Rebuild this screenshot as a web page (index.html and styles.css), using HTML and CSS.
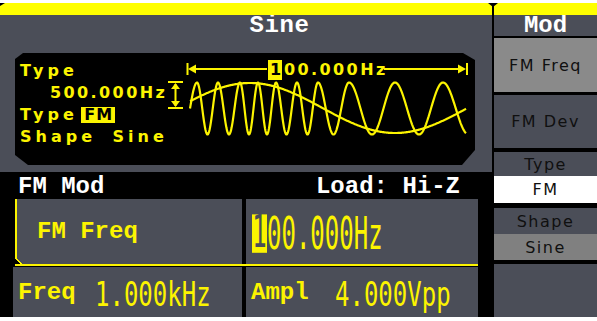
FILE: index.html
```html
<!DOCTYPE html>
<html lang="en">
	<head>
		<meta charset="UTF-8" />
		<meta name="viewport" content="width=device-width, initial-scale=1.0" />
		<title>FM Mod</title>
		<link rel="stylesheet" href="styles.css">
	</head>
	<body>
		<div class="screen">
			<div class="main">
				<div class="bar"></div>
				<div class="upper">
					<div class="title">Sine</div>
					<div class="display">
						<div class="params">
							<div>Type</div>
							<div class="num indent">500.000Hz</div>
							<div class="type-line">Type <span class="tag">FM</span></div>
							<div class="shape">Shape Sine</div>
						</div>
						<svg class="wave" viewBox="165 53 310 112" width="310" height="112">
							<g class="marks">
								<line x1="187.5" y1="63" x2="187.5" y2="75" />
								<line x1="195" y1="69" x2="267" y2="69" />
								<line x1="384" y1="69" x2="459" y2="69" />
								<line x1="467" y1="63" x2="467" y2="75" />
								<line x1="168" y1="82" x2="183" y2="82" />
								<line x1="168" y1="108" x2="183" y2="108" />
								<line x1="175.5" y1="84" x2="175.5" y2="106" />
							</g>
							<g class="heads">
								<polygon points="188,69 196,64.5 196,73.5" />
								<polygon points="466,69 458,64.5 458,73.5" />
								<polygon points="175.5,83 171,89 180,89" />
								<polygon points="175.5,107 171,101 180,101" />
							</g>
							<rect class="cursor-box" x="268" y="60" width="14" height="20" />
							<text class="scope-text cursor-digit" x="270" y="75">1</text>
							<text class="scope-text" x="284" y="75">00.000Hz</text>
							<polyline id="modulator" class="trace" points="" />
							<polyline id="carrier" class="trace" points="" />
						</svg>
					</div>
				</div>
				<div class="lower">
					<div class="status">
						<span>FM Mod</span>
						<span>Load: Hi-Z</span>
					</div>
					<div class="row first">
						<div class="cell selected">FM Freq</div>
						<div class="cell value">
							<span class="big tall"><span class="cursor">1</span>00.000Hz</span>
						</div>
					</div>
					<div class="row second">
						<div class="cell">
							<span class="lbl freq-lbl">Freq</span>
							<span class="big short">1.000kHz</span>
						</div>
						<div class="cell">
							<span class="lbl ampl-lbl">Ampl</span>
							<span class="big short">4.000Vpp</span>
						</div>
					</div>
				</div>
			</div>
			<div class="divider"></div>
			<div class="side">
				<div class="bar"></div>
				<div class="side-head">Mod</div>
				<div class="key light btn-freq">FM Freq</div>
				<div class="key btn-dev">FM Dev</div>
				<div class="key sub type-label">Type</div>
				<div class="key sub picked">FM</div>
				<div class="key sub shape-label">Shape</div>
				<div class="key sub light">Sine</div>
				<div class="key empty"></div>
			</div>
		</div>

		<script>
			// carrier phase (in cycles) at each peak, read off the scope
			const peaks = [
				[190, 0], [197, 0.25], [218, 1.25], [240, 2.25], [258, 3.25], [276, 4.25],
				[297, 5.25], [318, 6.25], [349, 7.25], [395, 8.25], [443, 9.25], [466, 9.7]
			];

			function phaseAt(x) {
				for (let i = 1; i < peaks.length; i++) {
					const [x0, p0] = peaks[i - 1];
					const [x1, p1] = peaks[i];
					if (x <= x1) return p0 + ((p1 - p0) * (x - x0)) / (x1 - x0);
				}
				return peaks[peaks.length - 1][1];
			}

			const carrier = [];
			const modulator = [];
			for (let x = 190; x <= 466; x += 0.5) {
				const c = 108.5 - 26 * Math.sin(2 * Math.PI * phaseAt(x));
				const m = 108 - 25 * Math.cos((2 * Math.PI * (x - 250)) / 290);
				carrier.push(x + "," + c.toFixed(1));
				modulator.push(x + "," + m.toFixed(1));
			}
			document.getElementById("carrier").setAttribute("points", carrier.join(" "));
			document.getElementById("modulator").setAttribute("points", modulator.join(" "));
		</script>
	</body>
</html>
```

FILE: styles.css
```css
body {
	margin: 0;
	background: #fff;
	font-family: "DejaVu Sans", sans-serif;
}
.screen {
	display: flex;
	width: 597px;
	height: 314px;
	margin-top: 3px;
	background: #000;
}
.main {
	width: 492px;
	display: flex;
	flex-direction: column;
}
.bar {
	position: relative;
	height: 12px;
	background: #ffff00;
}
.main .bar::before {
	content: "";
	position: absolute;
	left: 0;
	top: 0;
	border-top: 3px solid #000;
	border-right: 5px solid transparent;
}
.upper {
	height: 157px;
	padding-left: 15px;
	background: #4b4e58;
}
.title {
	height: 38px;
	padding-left: 52px;
	text-align: center;
	color: #fff;
	font: bold 24px/21px "Liberation Mono", monospace;
	letter-spacing: 0.6px;
}
.display {
	display: flex;
	width: 460px;
	height: 112px;
	background: #000;
	clip-path: polygon(8px 0, 448px 0, 460px 7px, 460px 97px, 447px 112px, 13px 112px, 0 102px, 0 6px);
}
.params {
	width: 150px;
	padding: 7px 0 0 5px;
	box-sizing: border-box;
	color: #fcf400;
	font-weight: bold;
	font-size: 16px;
	line-height: 22px;
	letter-spacing: 4px;
	white-space: nowrap;
}
.num {
	letter-spacing: 2.4px;
}
.indent {
	padding-left: 30px;
}
.type-line {
	word-spacing: -6px;
}
.tag {
	display: inline-block;
	padding: 0 2px 0 3px;
	line-height: 16px;
	letter-spacing: 1px;
	word-spacing: 0;
	background: #fcf400;
	color: #000;
}
.shape {
	word-spacing: 7px;
}
.wave {
	display: block;
}
.marks line {
	stroke: #fcf400;
	stroke-width: 2;
}
.heads polygon {
	fill: #fcf400;
}
.trace {
	fill: none;
	stroke: #fcf400;
	stroke-width: 2.2;
	stroke-linejoin: round;
}
.cursor-box {
	fill: #fcf400;
}
.scope-text {
	font: bold 16px "DejaVu Sans", sans-serif;
	letter-spacing: 2.4px;
	fill: #fcf400;
}
.scope-text.cursor-digit {
	fill: #000;
}
.lower {
	display: flex;
	flex-direction: column;
	height: 145px;
	padding: 0 14px 0 13px;
	background: #000;
	font: bold 24px "Liberation Mono", monospace;
}
.status {
	display: flex;
	justify-content: space-between;
	height: 27px;
	box-sizing: border-box;
	padding: 2px 18px 0 5px;
	line-height: 25px;
	color: #fff;
}
.row {
	display: flex;
	gap: 4px;
}
.row.first {
	height: 67px;
	box-sizing: border-box;
	margin-left: 2px;
	border-bottom: 2px solid #fcf400;
}
.row.second {
	height: 50px;
	margin-top: 1px;
}
.cell {
	display: flex;
	align-items: center;
	box-sizing: border-box;
	padding-left: 5px;
	background: #4b4e58;
	color: #fcf400;
	white-space: nowrap;
}
.row.first .cell:first-child {
	width: 227px;
}
.row.second .cell:first-child {
	width: 229px;
}
.row .cell:last-child {
	flex: 1;
}
.cell.selected {
	padding-left: 22px;
	background:
		linear-gradient(45deg, #000 0 4px, #fcf400 4px 5.5px, transparent 5.5px),
		linear-gradient(to right, #fcf400 0 2px, transparent 2px),
		#4b4e58;
}
.cell.value {
	padding-left: 6px;
}
.big {
	display: inline-block;
	font: 24px "DejaVu Sans Mono", monospace;
}
.big.tall {
	transform: translateY(2.5px) scaleY(1.83);
}
.big.short {
	transform: translateY(3px) scaleY(1.43);
}
.cursor {
	display: inline-block;
	width: 15px;
	height: 21px;
	line-height: 21px;
	text-align: center;
	vertical-align: top;
	margin-top: 3px;
	background: #fcf400;
	color: #4b4e58;
}
.freq-lbl {
	width: 77px;
}
.ampl-lbl {
	width: 84px;
}
.divider {
	position: relative;
	width: 2px;
	background: #000;
}
.divider::before {
	content: "";
	position: absolute;
	z-index: 1;
	left: -4px;
	top: 0;
	border-left: 5px solid transparent;
	border-right: 5px solid transparent;
	border-top: 4px solid #000;
}
.side {
	display: flex;
	flex-direction: column;
	width: 103px;
	background: #000;
}
.side-head {
	height: 21px;
	background: #4b4e58;
	color: #fff;
	text-align: center;
	font: bold 24px/21px "Liberation Mono", monospace;
}
.key {
	display: flex;
	align-items: center;
	justify-content: center;
	background: #4b4e58;
	color: #101010;
	font-size: 16px;
	letter-spacing: 1.5px;
}
.key.light {
	background: #8a8a8a;
}
.key.sub.light {
	height: 26px;
	background: #808080;
}
.btn-freq {
	height: 54px;
	margin-top: 2px;
}
.btn-dev {
	height: 53px;
	margin-top: 3px;
}
.type-label {
	height: 24px;
	margin-top: 4px;
}
.key.picked {
	height: 27px;
	background: #fff;
}
.shape-label {
	height: 26px;
	margin-top: 5px;
}
.key.empty {
	flex: 1;
	margin-top: 4px;
}
```
